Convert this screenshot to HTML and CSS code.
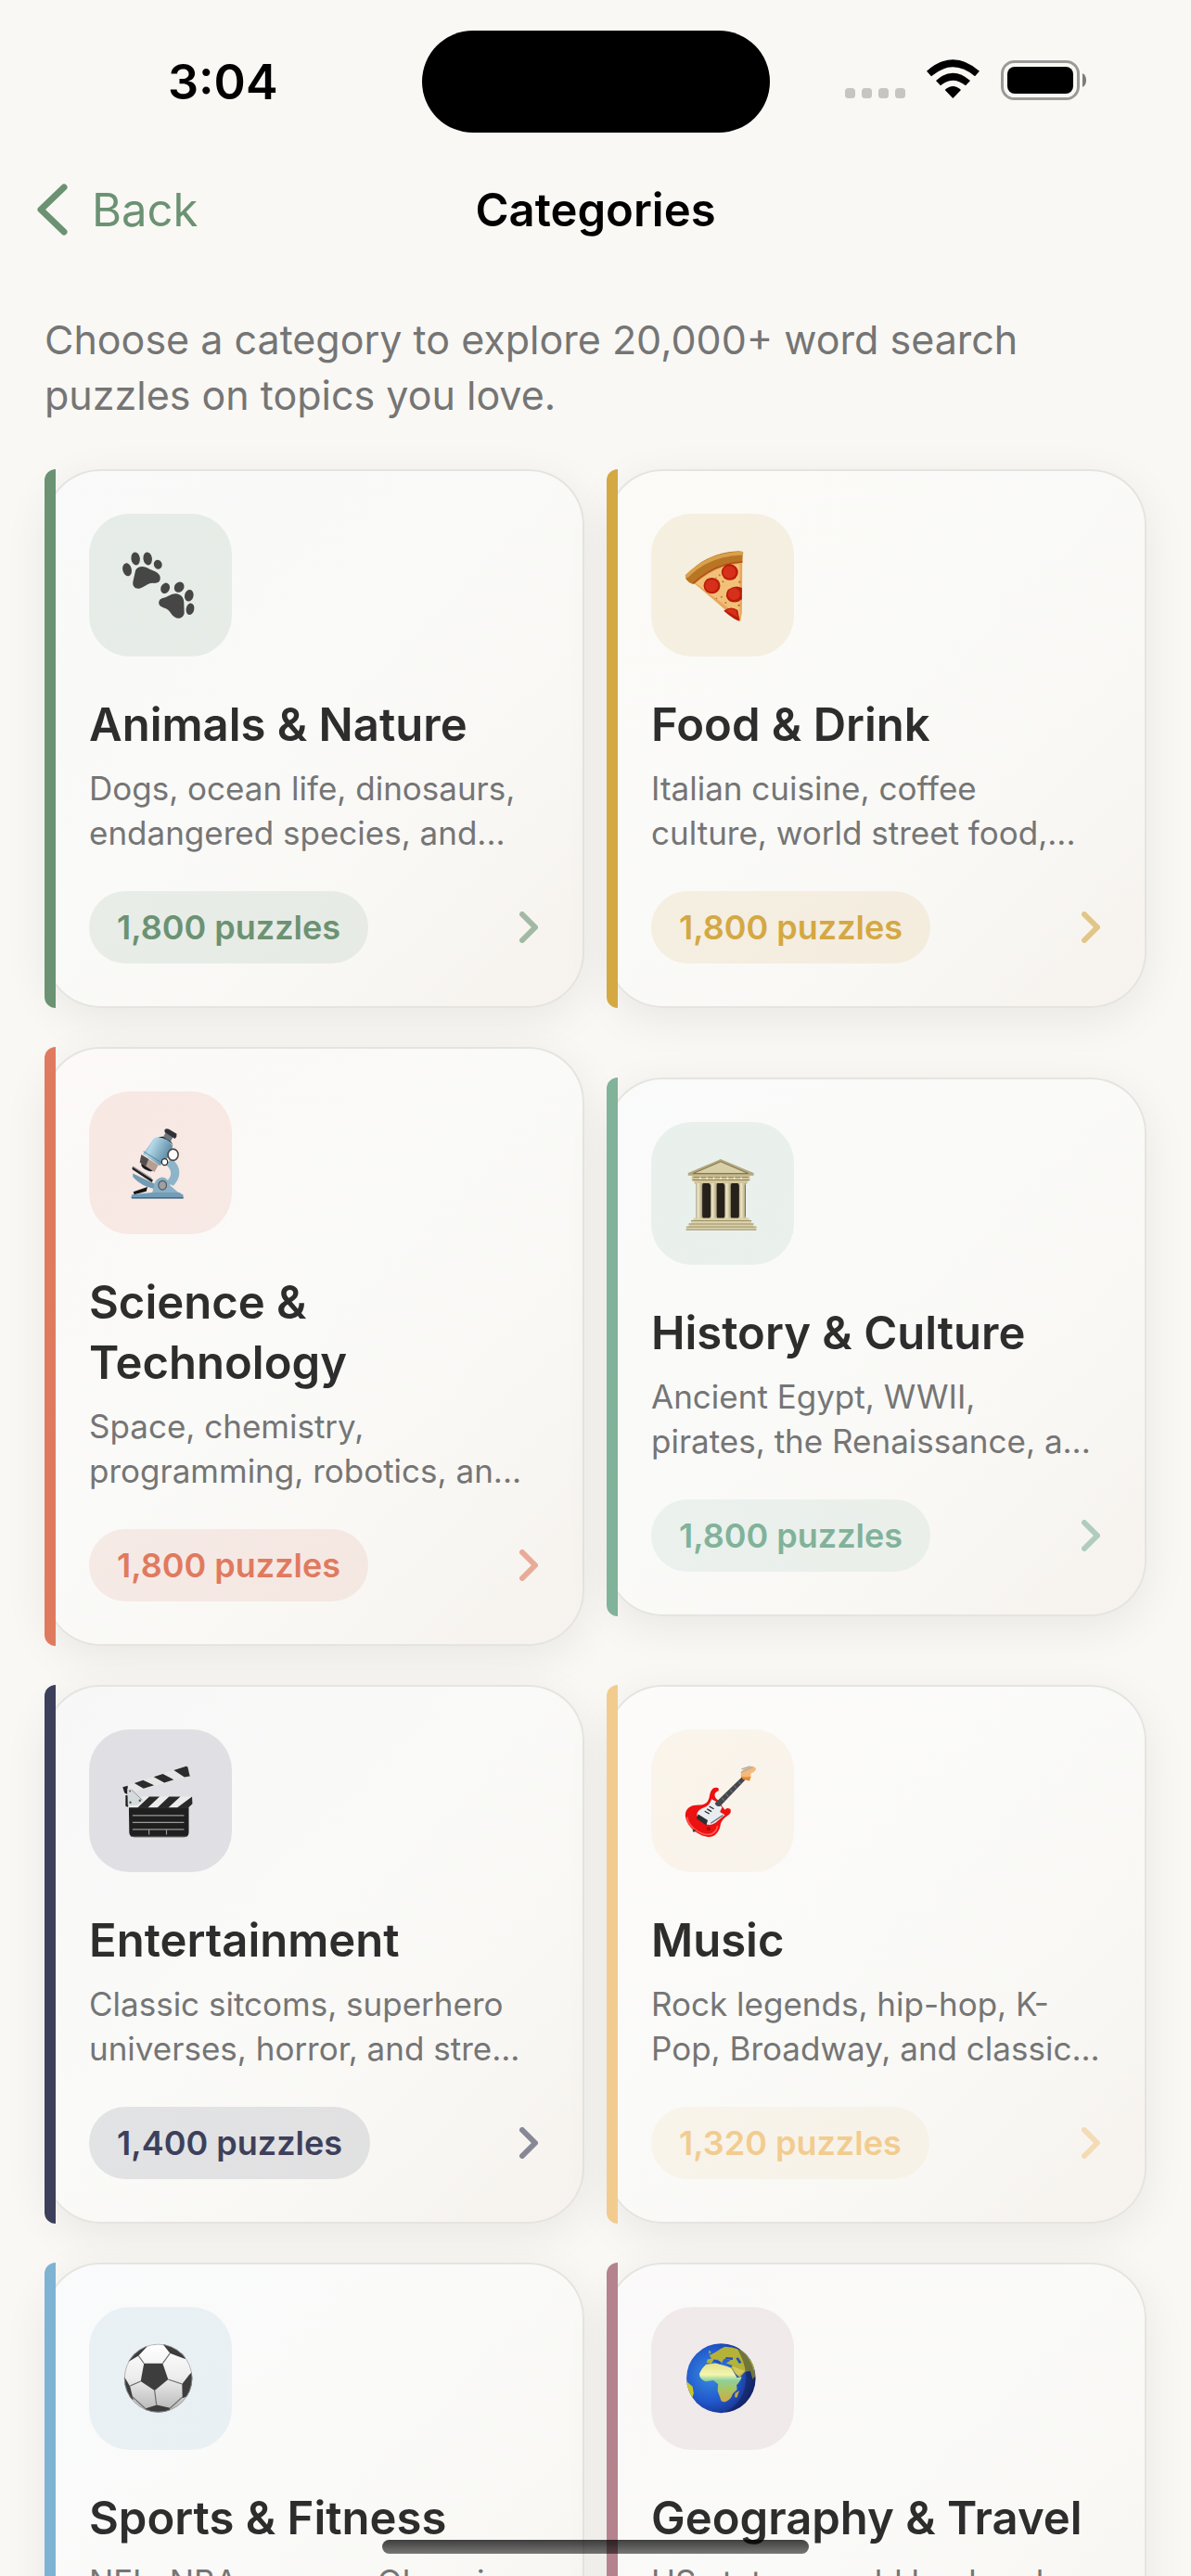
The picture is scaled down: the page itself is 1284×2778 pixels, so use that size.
FILE: index.html
```html
<!DOCTYPE html>
<html lang="en">
<head>
    <meta charset="UTF-8">
    <meta name="viewport" content="width=device-width, initial-scale=1.0">
    <title>Categories</title>
    <link rel="stylesheet" href="styles.css">
</head>
<body>
    <div class="status-bar">
        <span class="time">3:04</span>
        <span class="island"></span>
        <div class="status-icons">
            <svg class="signal" viewBox="0 0 65 11" fill="#c6c5c3"><rect width="11" height="11" rx="3.5"/><rect x="18" width="11" height="11" rx="3.5"/><rect x="36" width="11" height="11" rx="3.5"/><rect x="54" width="11" height="11" rx="3.5"/></svg>
            <svg class="wifi" viewBox="298 103 171 126"><path d="M298 141Q383 66 469 141L454 158Q383 98 313 158Z"/><path d="M328 172Q383 122 439 172L424 188Q383 154 343 188Z"/><path d="M357 202Q383 178 409 202L383 229Z"/></svg>
            <svg class="battery" viewBox="0 0 93 43"><rect x="1.5" y="1.5" width="82" height="40" rx="13" fill="none" stroke="#9b9a98" stroke-width="3"/><rect x="7" y="7" width="71" height="29" rx="8"/><path d="M88 14Q92 16 92 21.500T88 29Z" fill="#7d7c7a"/></svg>
        </div>
    </div>

    <header class="nav">
        <button class="back" type="button">
            <svg viewBox="0 0 33 56"><path d="M29 4L4 28L29 52"/></svg>
            Back
        </button>
        <h1>Categories</h1>
    </header>

    <main>
        <p class="intro">Choose a category to explore 20,000+ word search puzzles on topics you love.</p>

        <div class="grid">
            <a class="card green" href="#animals">
                <span class="icon">
                    <svg viewBox="167 159 390 391" preserveAspectRatio="none" fill="#464646">
                        <ellipse cx="271" cy="312" rx="12" ry="18" transform="rotate(-14 271 312)"/>
                        <ellipse cx="294" cy="282" rx="12" ry="18" transform="rotate(-8 294 282)"/>
                        <ellipse cx="327" cy="282" rx="12" ry="18" transform="rotate(-8 327 282)"/>
                        <ellipse cx="355" cy="298" rx="11" ry="13" transform="rotate(-20 355 298)"/>
                        <path d="M294 314C300 301 319 301 331 310C342 316 357 318 361 331C363 345 356 350 340 349C324 350 319 361 304 364C291 365 285 356 287 345Z"/>
                        <ellipse cx="375" cy="363" rx="12" ry="15" transform="rotate(25 375 363)"/>
                        <ellipse cx="413" cy="360" rx="13" ry="15" transform="rotate(35 413 360)"/>
                        <ellipse cx="440" cy="383" rx="12" ry="16" transform="rotate(12 440 383)"/>
                        <ellipse cx="443" cy="420" rx="11" ry="16" transform="rotate(12 443 420)"/>
                        <path d="M373 389C385 385 392 377 404 378C418 379 426 389 426 402L427 431C425 444 411 449 401 442C391 436 389 425 378 419C364 415 355 410 358 399C360 392 366 391 373 389Z"/>
                    </svg>
                </span>
                <h2>Animals &amp; Nature</h2>
                <p>Dogs, ocean life, dinosaurs, endangered species, and...</p>
                <span class="row">
                    <span class="pill">1,800 puzzles</span>
                    <svg class="chevron" viewBox="0 0 20 34"><path d="M3 3L17 17L3 31"/></svg>
                </span>
            </a>

            <a class="card gold" href="#food">
                <span class="icon">
                    <svg viewBox="151 159 376 391" preserveAspectRatio="none">
                        <path d="M258 345Q322 283 391 284L390 430L386 452Q380 456 372 447Q315 392 258 345Z" fill="#e9a75c"/>
                        <path d="M268 349Q325 300 384 297L384 440Z" fill="#f2c179"/>
                        <path d="M243 330Q292 265 382 261Q392 262 392 272L391 293Q320 297 262 352Q250 350 242 337Z" fill="#b87524"/>
                        <path d="M246 329Q300 271 389 267" fill="none" stroke="#d9a04d" stroke-width="10" stroke-linecap="round"/>
                        <path d="M262 350Q320 293 391 291" fill="none" stroke="#b5501a" stroke-width="4"/>
                        <g fill="#b81d08"><ellipse cx="358" cy="319" rx="22" ry="22"/><ellipse cx="311" cy="356" rx="22" ry="22"/><path d="M390 362Q372 352 353 367Q342 385 357 398Q374 407 390 393Z"/><path d="M342 425Q361 409 379 423L384 452Q372 452 342 425Z"/></g>
                        <g fill="#d6301a"><ellipse cx="357" cy="319" rx="17" ry="17"/><ellipse cx="310" cy="356" rx="17" ry="17"/><ellipse cx="369" cy="379" rx="16" ry="16"/><path d="M348 425Q361 414 375 425L379 443Z"/></g>
                        <g fill="#c8702e"><circle cx="331" cy="327" r="2.500"/><circle cx="340" cy="345" r="2.500"/><circle cx="336" cy="387" r="2.500"/><circle cx="384" cy="346" r="3"/><circle cx="322" cy="335" r="2"/><circle cx="347" cy="403" r="2.500"/><circle cx="382" cy="410" r="3"/><circle cx="323" cy="391" r="2"/></g>
                    </svg>
                </span>
                <h2>Food &amp; Drink</h2>
                <p>Italian cuisine, coffee<br>culture, world street food,...</p>
                <span class="row">
                    <span class="pill">1,800 puzzles</span>
                    <svg class="chevron" viewBox="0 0 20 34"><path d="M3 3L17 17L3 31"/></svg>
                </span>
            </a>

            <a class="card coral" href="#science">
                <span class="icon">
                    <svg viewBox="167 151 391 350" preserveAspectRatio="none">
                        <defs><linearGradient id="tube" x1="0" y1="0" x2="1" y2="0.500"><stop offset="0" stop-color="#5f8aa3"/><stop offset="0.350" stop-color="#b4d8e8"/><stop offset="1" stop-color="#5485a0"/></linearGradient></defs>
                        <path d="M392 316C416 330 424 357 398 382L377 374C398 357 393 340 376 330Z" fill="#8db4c9"/>
                        <path d="M287 352L350 379L348 391Q306 382 287 360Z" fill="#739bb3"/>
                        <path d="M286 335L342 368L339 374L285 342Z" fill="#222"/>
                        <path d="M287 335L338 364" stroke="#999" stroke-width="3"/>
                        <path d="M288 397L327 385L324 396L291 404Z" fill="#161616"/>
                        <path d="M310 327L345 342Q342 350 327 345Q308 338 310 327Z" fill="#171b20"/>
                        <path d="M310 306L357 331L346 349L306 325Z" fill="#b79e91"/>
                        <path d="M310 306L330 317L322 335L306 325Z" fill="#554d4d"/>
                        <path d="M345 266Q370 254 396 284L390 306L361 333L314 305Z" fill="url(#tube)"/>
                        <path d="M316 298L366 326" stroke="#4c7890" stroke-width="2"/>
                        <path d="M357 263Q384 256 397 283Q382 266 357 263Z" fill="#141414"/>
                        <path d="M378 250L398 261L390 274L370 263Z" fill="#6d7780"/>
                        <path d="M374 245Q380 239 392 247L407 255Q408 263 402 267L374 251Z" fill="#303238"/>
                        <circle cx="397" cy="306" r="14" fill="#fff" stroke="#4b4b4b" stroke-width="4"/>
                        <circle cx="374" cy="324" r="8" fill="#fff" stroke="#262626" stroke-width="3"/>
                        <path d="M340 400L346 376Q354 361 368 361Q382 362 390 382L413 400Z" fill="#8bb0c5"/>
                        <circle cx="368" cy="381" r="11" fill="#9f9fa0" stroke="#4f5a62" stroke-width="3"/>
                        <path d="M284 404L340 399H414L425 405V413H282Z" fill="#729db9"/>
                        <path d="M284 412H425" stroke="#385b72" stroke-width="3"/>
                    </svg>
                </span>
                <h2>Science &amp; Technology</h2>
                <p>Space, chemistry, programming, robotics, an...</p>
                <span class="row">
                    <span class="pill">1,800 puzzles</span>
                    <svg class="chevron" viewBox="0 0 20 34"><path d="M3 3L17 17L3 31"/></svg>
                </span>
            </a>

            <a class="card mint" href="#history">
                <span class="icon">
                    <svg viewBox="151 225 376 350" preserveAspectRatio="none">
                        <defs><linearGradient id="column"><stop offset="0" stop-color="#a29a75"/><stop offset="0.400" stop-color="#eee6c4"/><stop offset="1" stop-color="#a0966f"/></linearGradient></defs>
                        <path d="M270 372H400V464H270Z" fill="#27211b"/>
                        <path d="M274 372H286V464H274ZM308 372H324V464H308ZM345 372H361V464H345ZM382 372H396V464H382Z" fill="#675d48"/>
                        <path d="M248 350L334 316L421 350V356H248Z" fill="#b3a77e"/>
                        <path d="M262 351L334 322L406 351Z" fill="#d9cfa6" stroke="#716743" stroke-width="2"/>
                        <path d="M258 357H411V370H405V375H264V370H258Z" fill="#d2c79c"/>
                        <path d="M262 360H407M260 367H409" stroke="#81764f" stroke-width="2"/>
                        <path d="M280 360V366M298 360V366M316 360V366M334 360V366M352 360V366M370 360V366M388 360V366" stroke="#f0e9c8" stroke-width="4"/>
                        <g fill="url(#column)">
                            <path d="M266 375H288L285 380V455L288 462H267L270 455V380Z"/>
                            <path d="M303 375H325L323 380V455L326 462H304L308 455V380Z"/>
                            <path d="M341 375H363L360 380V455L363 462H342L345 455V380Z"/>
                            <path d="M379 375H402L399 380V455L402 462H380L383 455V380Z"/>
                        </g>
                        <path d="M262 460H409V467H415V474H420V482H428V489H243V482H250V474H256V467H262Z" fill="#dcd2aa"/>
                        <path d="M256 467H415M250 475H421M244 482H428M243 489H428" stroke="#8d815a" stroke-width="2"/>
                    </svg>
                </span>
                <h2>History &amp; Culture</h2>
                <p>Ancient Egypt, WWII,<br>pirates, the Renaissance, a...</p>
                <span class="row">
                    <span class="pill">1,800 puzzles</span>
                    <svg class="chevron" viewBox="0 0 20 34"><path d="M3 3L17 17L3 31"/></svg>
                </span>
            </a>

            <a class="card navy" href="#entertainment">
                <span class="icon">
                    <svg viewBox="167 163 391 391" preserveAspectRatio="none">
                        <path d="M259 320L433 264Q438 265 443 290L276 338L262 341Z" fill="#e6e6e6"/>
                        <path d="M291 310L315 302L345 316L316 325ZM344 293L369 285L399 301L373 309ZM399 275L433 264L437 266L443 291L428 294Z" fill="#2b2b2b"/>
                        <path d="M259 321L273 317L272 341L264 337Z" fill="#222"/>
                        <path d="M267 343V373L276 377L283 345Z" fill="#1b1b1b"/>
                        <path d="M272 378L276 369L303 347H450V366L440 378Z" fill="#ececec"/>
                        <path d="M332 347H360L327 378H299ZM386 347H417L383 378H353ZM449 347L450 367L438 378H407Z" fill="#292929"/>
                        <path d="M272 325L289 330L316 357L300 370L273 372Z" fill="#d5dadc"/>
                        <path d="M283 328L312 356" stroke="#8b8b8b" stroke-width="2"/>
                        <g fill="#555"><circle cx="280" cy="363" r="3"/><circle cx="306" cy="358" r="3"/><circle cx="279" cy="332" r="2.500"/></g>
                        <path d="M276 377H440V445Q440 458 428 458H291Q277 458 277 445Z" fill="#1f1f1f"/>
                        <path d="M286 399H427M286 418H427M286 437H427M331 438V451M379 438V451" stroke="#9a9a9a" stroke-width="3" fill="none"/>
                        <path d="M281 456H436" stroke="#666" stroke-width="2"/>
                    </svg>
                </span>
                <h2>Entertainment</h2>
                <p>Classic sitcoms, superhero universes, horror, and stre...</p>
                <span class="row">
                    <span class="pill">1,400 puzzles</span>
                    <svg class="chevron" viewBox="0 0 20 34"><path d="M3 3L17 17L3 31"/></svg>
                </span>
            </a>

            <a class="card amber" href="#music">
                <span class="icon">
                    <svg viewBox="151 163 376 391" preserveAspectRatio="none">
                        <path d="M304 349C307 326 316 320 326 323Q331 326 328 331C313 337 318 350 326 356L345 383Q350 376 359 381Q363 389 357 395C344 405 335 411 333 427C329 448 314 460 298 457C272 453 244 428 241 400C240 378 257 370 276 370C293 370 301 363 304 349Z" fill="#ed1111"/>
                        <path d="M246 403C247 426 276 450 300 451C315 451 323 441 326 427" fill="none" stroke="#ff5b54" stroke-width="4"/>
                        <path d="M310 354L325 362L338 376L332 389L345 397L320 419Q303 430 292 420L272 400Q270 384 290 377Q304 373 310 354Z" fill="#e9edf0"/>
                        <path d="M319 365L392 291L398 302L333 373Q321 376 319 365Z" fill="#45484c"/>
                        <path d="M337 350L343 358M348 339L354 347M359 328L365 336M370 317L376 325M381 306L387 314" stroke="#8b8e91" stroke-width="2"/>
                        <path d="M387 291Q387 276 399 269L414 264Q427 264 427 273Q424 280 414 283L410 304L396 299Z" fill="#f4b97b"/>
                        <path d="M387 291L393 300L410 304L414 291Q402 296 387 291Z" fill="#e98a2b"/>
                        <path d="M387 281L418 266M389 272L412 264" stroke="#aaa" stroke-width="3"/>
                        <path d="M275 395L300 412L296 426L270 407Z" fill="#2d2f32"/>
                        <path d="M292 387L304 394M298 381L310 388M304 374L316 381" stroke="#222" stroke-width="3"/>
                        <path d="M308 420L340 398" stroke="#62666a" stroke-width="3"/>
                        <circle cx="264" cy="440" r="4" fill="#50383a"/><circle cx="302" cy="435" r="5" fill="#a50f0f"/>
                    </svg>
                </span>
                <h2>Music</h2>
                <p>Rock legends, hip-hop, K-Pop, Broadway, and classic...</p>
                <span class="row">
                    <span class="pill">1,320 puzzles</span>
                    <svg class="chevron" viewBox="0 0 20 34"><path d="M3 3L17 17L3 31"/></svg>
                </span>
            </a>

            <a class="card blue" href="#sports">
                <span class="icon">
                    <svg viewBox="167 264 390 464" preserveAspectRatio="none">
                        <defs>
                            <linearGradient id="ball" x1="0" y1="0" x2="0" y2="1"><stop offset="0" stop-color="#fff"/><stop offset="0.500" stop-color="#ececec"/><stop offset="1" stop-color="#b5b5b5"/></linearGradient>
                            <clipPath id="ballClip"><ellipse cx="356" cy="495" rx="93" ry="111"/></clipPath>
                        </defs>
                        <ellipse cx="356" cy="495" rx="93" ry="111" fill="url(#ball)"/>
                        <g clip-path="url(#ballClip)">
                            <g fill="#3d3d3d">
                                <path d="M317 447H368L383 499L346 535L308 505Z"/>
                                <path d="M270 445L302 422L325 393L320 375L270 400Z"/>
                                <path d="M368 384L388 414L430 433V380Z"/>
                                <path d="M452 470L440 485L421 514L422 560L452 545Z"/>
                                <path d="M260 485L268 500L279 522L288 565L260 560Z"/>
                                <path d="M320 594L352 582L388 592L385 612H325Z"/>
                            </g>
                            <path d="M317 447L302 422M368 447L388 414M383 499L421 514M346 535L351 582M308 505L279 520M285 555L322 595M422 556L388 593" stroke="#6a6a6a" stroke-width="3"/>
                        </g>
                        <ellipse cx="356" cy="495" rx="92" ry="110" fill="none" stroke="#9b9b9b" stroke-width="2"/>
                    </svg>
                </span>
                <h2>Sports &amp; Fitness</h2>
                <p>NFL, NBA, soccer, Olympics, and more...</p>
                <span class="row">
                    <span class="pill">1,800 puzzles</span>
                    <svg class="chevron" viewBox="0 0 20 34"><path d="M3 3L17 17L3 31"/></svg>
                </span>
            </a>

            <a class="card mauve" href="#geography">
                <span class="icon">
                    <svg viewBox="151 264 376 464" preserveAspectRatio="none">
                        <defs>
                            <radialGradient id="sea" cx="0.350" cy="0.450" r="0.650"><stop offset="0" stop-color="#3a8de0"/><stop offset="0.600" stop-color="#2158cc"/><stop offset="1" stop-color="#182a80"/></radialGradient>
                            <linearGradient id="land" x1="0" y1="0" x2="0" y2="1"><stop offset="0" stop-color="#e3e08a"/><stop offset="0.300" stop-color="#f3f6b0"/><stop offset="0.450" stop-color="#8ed09a"/><stop offset="0.650" stop-color="#a5c66a"/><stop offset="1" stop-color="#d0a942"/></linearGradient>
                            <clipPath id="globeClip"><ellipse cx="335" cy="495" rx="91" ry="113"/></clipPath>
                        </defs>
                        <ellipse cx="335" cy="495" rx="91" ry="113" fill="url(#sea)"/>
                        <g clip-path="url(#globeClip)">
                            <path d="M296 450L321 446L350 456L362 462L377 494L389 491Q388 503 376 517L377 532L366 545Q360 567 347 571Q335 575 333 560L326 536L327 514L315 502L294 506Q278 498 278 481Q285 460 296 450Z" fill="url(#land)"/>
                            <path d="M297 444L299 434L310 431L304 421L320 411L333 400L345 393L364 395L392 405L422 450L424 490L418 498L412 472L398 474L384 493L374 482L361 462L365 454L348 446L360 437L343 432L336 446L326 434L314 438L309 448Z" fill="#b5b23a"/>
                            <path d="M364 455L397 472L382 487L374 480Z" fill="#d5c75d"/>
                            <path d="M347 430L366 432M377 429L386 446M315 437L334 446" stroke="#1e51b9" stroke-width="7"/>
                            <path d="M383 535L372 544L371 557L377 558Z" fill="#c9a743"/>
                            <path d="M244 505L260 522L263 544L258 563L244 545Z" fill="#c7c727"/>
                            <path d="M303 403L309 411L303 417Z" fill="#b2b542"/>
                        </g>
                        <path d="M374 393C412 421 427 469 424 511C420 560 388 602 345 606C405 570 419 478 374 393Z" fill="#101a3a" opacity="0.400"/>
                    </svg>
                </span>
                <h2>Geography &amp; Travel</h2>
                <p>US states, world landmarks, and more...</p>
                <span class="row">
                    <span class="pill">1,800 puzzles</span>
                    <svg class="chevron" viewBox="0 0 20 34"><path d="M3 3L17 17L3 31"/></svg>
                </span>
            </a>
        </div>
    </main>

    <div class="home-indicator"></div>
</body>
</html>
```
FILE: styles.css
```css
* {
    box-sizing: border-box;
}
body {
    margin: 0;
    height: 100vh;
    overflow: hidden;
    background: #f9f8f4;
    color: #2d2d2d;
    font-family: Inter, "Liberation Sans", sans-serif;
}
h1, h2, p {
    margin: 0;
}
svg {
    display: block;
}

/* status bar */
.status-bar {
    display: grid;
    grid-template-columns: 1fr auto 1fr;
    align-items: center;
    height: 176px;
    color: #000;
}
.time {
    justify-self: center;
    padding-left: 26px;
    font-size: 52px;
    font-weight: 600;
}
.island {
    width: 375px;
    height: 110px;
    border-radius: 55px;
    background: #000;
}
.status-icons {
    display: flex;
    align-items: flex-end;
    justify-content: flex-end;
    gap: 23px;
    padding: 0 112px 4px 0;
}
.signal {
    width: 65px;
    height: 11px;
    margin-bottom: 2px;
}
.wifi {
    width: 57px;
    height: 42px;
    margin-bottom: 2px;
}
.battery {
    width: 93px;
    height: 43px;
}

/* navigation */
.nav {
    display: grid;
    grid-template-columns: 1fr auto 1fr;
    align-items: center;
    height: 100px;
    padding: 0 40px;
}
.back {
    display: flex;
    align-items: center;
    gap: 26px;
    padding: 0;
    border: 0;
    background: none;
    color: #6b9273;
    font-family: inherit;
    font-size: 49px;
    cursor: pointer;
}
.back svg {
    width: 33px;
    height: 56px;
    fill: none;
    stroke: #6b9273;
    stroke-width: 7;
    stroke-linecap: round;
    stroke-linejoin: round;
}
.nav h1 {
    color: #000;
    font-size: 49px;
    font-weight: 600;
}

main {
    padding: 60px 48px 0;
}
.intro {
    margin-bottom: 50px;
    color: #757575;
    font-size: 43px;
    line-height: 60px;
}

/* cards */
.grid {
    display: grid;
    grid-template-columns: 1fr 1fr;
    align-items: center;
    gap: 42px 24px;
}
.card {
    position: relative;
    display: flex;
    flex-direction: column;
    padding: 48px;
    border-radius: 60px;
    background: linear-gradient(135deg, color-mix(in srgb, var(--accent) 3%, #fdfdfd), #fafaf8 45%, #f9f8f5 70%, #f6f2ed);
    box-shadow: inset 0 0 0 2px #e5e4e0, 0 12px 48px rgba(0, 0, 0, 0.07);
    color: #2d2d2d;
    text-decoration: none;
}
.card::before {
    content: "";
    position: absolute;
    top: 0;
    bottom: 0;
    left: 0;
    width: 12px;
    border-radius: 12px 0 0 12px;
    background: var(--accent);
}
.green { --accent: #6b9273; }
.gold { --accent: #d4a843; }
.coral { --accent: #e07a5f; }
.mint { --accent: #81b29a; }
.navy { --accent: #3d405b; }
.amber { --accent: #f2cc8f; }
.blue { --accent: #7fb3d3; }
.mauve { --accent: #b5838d; }

.icon {
    width: 154px;
    height: 154px;
    border-radius: 44px;
    background: color-mix(in srgb, var(--accent) 13%, transparent);
}
.icon svg {
    width: 154px;
    height: 154px;
}
.card h2 {
    margin-top: 41px;
    font-size: 49px;
    font-weight: 600;
    line-height: 65px;
}
.card p {
    margin-top: 12px;
    color: #757575;
    font-size: 35px;
    line-height: 48px;
}
.row {
    display: flex;
    align-items: center;
    justify-content: space-between;
    margin-top: 39px;
}
.pill {
    padding: 0 30px;
    border-radius: 39px;
    background: color-mix(in srgb, var(--accent) 12%, transparent);
    color: var(--accent);
    font-size: 36px;
    font-weight: 600;
    line-height: 78px;
}
.chevron {
    width: 20px;
    height: 34px;
    margin-right: 2px;
    fill: none;
    stroke: var(--accent);
    stroke-width: 6;
    stroke-linecap: round;
    stroke-linejoin: round;
    opacity: 0.6;
}

.home-indicator {
    position: fixed;
    bottom: 24px;
    left: 50%;
    width: 460px;
    height: 15px;
    margin-left: -230px;
    border-radius: 8px;
    background: linear-gradient(rgba(0, 0, 0, 0.75), rgba(0, 0, 0, 0.52));
}
```
